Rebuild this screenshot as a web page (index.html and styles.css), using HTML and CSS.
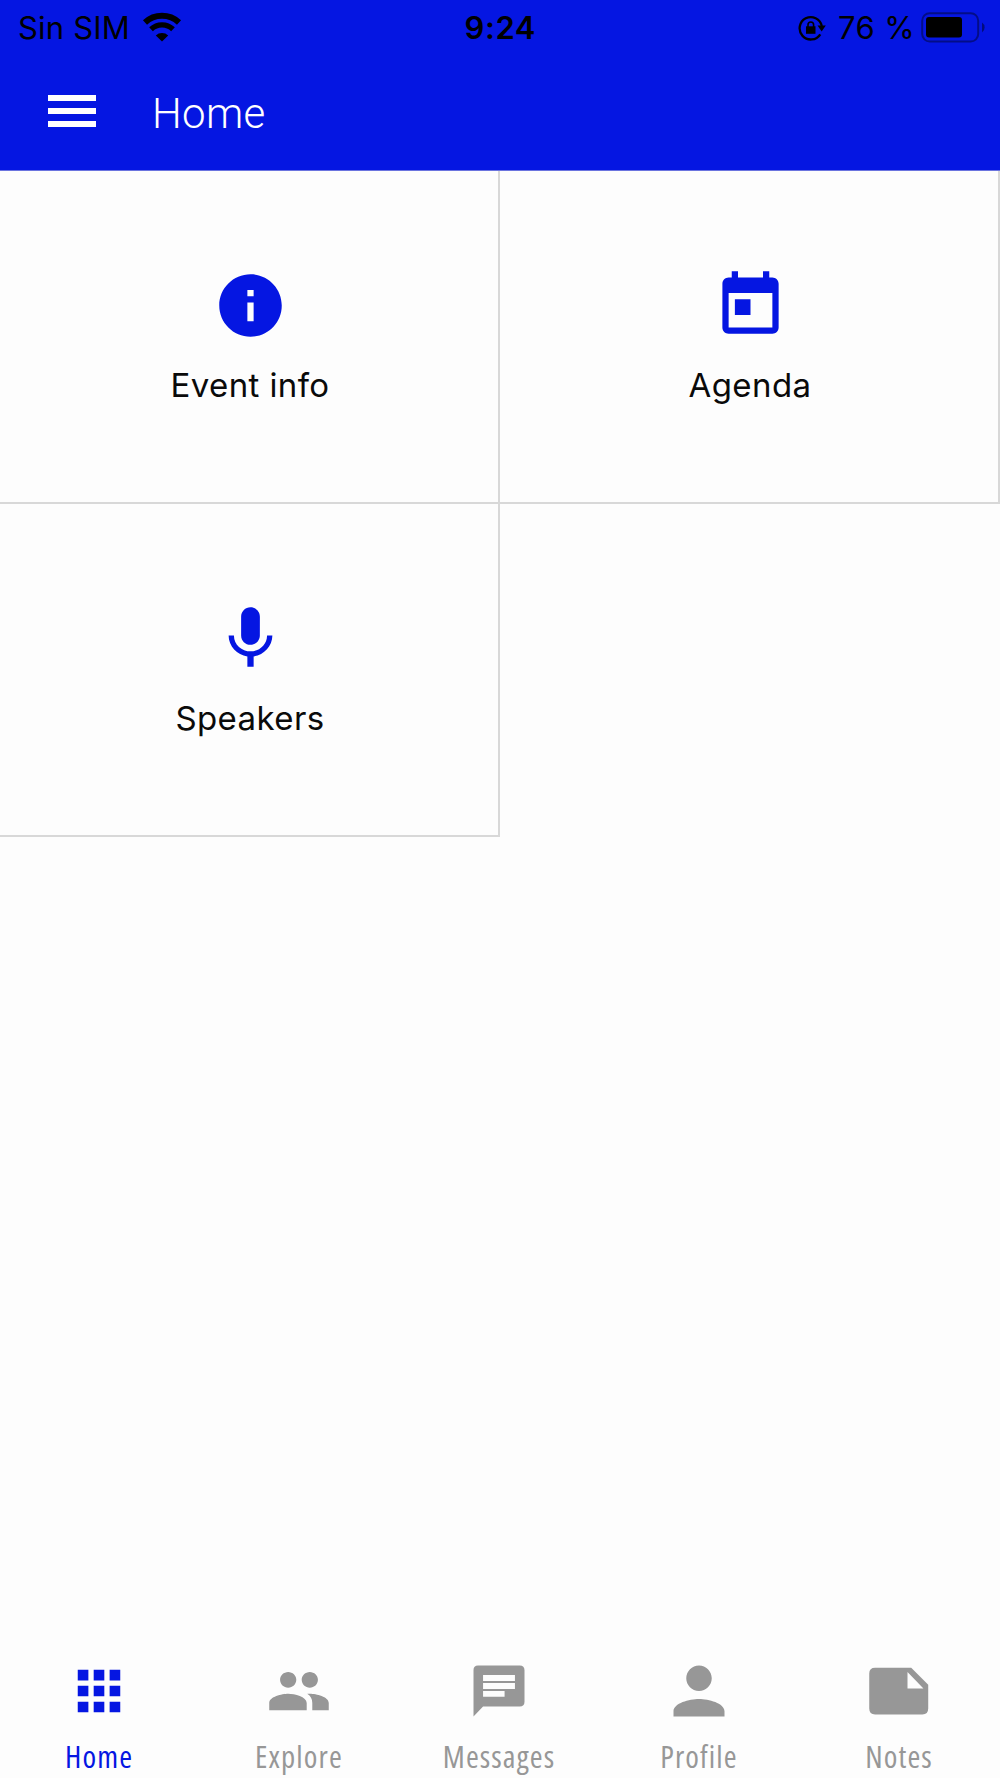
FILE: index.html
```
<!DOCTYPE html>
<html lang="en">
  <head>
    <meta charset="UTF-8" />
    <title>Home</title>
    <link rel="stylesheet" href="styles.css">
  </head>
  <body>
    <header class="header">
      <div class="status-bar">
        <div class="status-left">
          <span class="carrier">Sin SIM</span>
          <svg class="wifi" viewBox="0 0 40 30" width="40" height="30">
            <path d="M3 10.5a25 25 0 0 1 34 0" fill="none" stroke="#000" stroke-width="6" />
            <path d="M9 17.3a16 16 0 0 1 22 0" fill="none" stroke="#000" stroke-width="5.4" />
            <path d="M20 29.5l-6.2-6.1a9 9 0 0 1 12.4 0z" />
          </svg>
        </div>
        <span class="clock">9:24</span>
        <div class="status-right">
          <svg class="lock" viewBox="0 0 28 26" width="28" height="26">
            <path d="M22.3 19.3A11.2 11.2 0 1 1 23.8 11" fill="none" stroke="#000" stroke-width="2.3" />
            <path d="M19.5 10.5h8.3l-4.1 6z" />
            <path d="M8 11.3h9.5v7.5H8z" />
            <path d="M10 12V9.8a2.8 2.8 0 0 1 5.6 0V12" fill="none" stroke="#000" stroke-width="1.6" />
          </svg>
          <span class="percent">76 %</span>
          <svg class="battery" viewBox="0 0 64 31" width="64" height="31">
            <rect x="1.2" y="1.2" width="56" height="28.4" rx="7.5" fill="none" stroke="#000" stroke-opacity=".4" stroke-width="2" />
            <rect x="5" y="5" width="36" height="20.5" rx="3" />
            <path d="M61 10.5q2.6 1.6 2.6 5t-2.6 5z" fill-opacity=".45" />
          </svg>
        </div>
      </div>
      <div class="toolbar">
        <div class="menu">
          <span></span>
          <span></span>
          <span></span>
        </div>
        <h1 class="title">Home</h1>
      </div>
    </header>

    <main class="tiles">
      <div class="tile">
        <svg class="tile-icon" viewBox="0 0 24 24">
          <path d="M12 2C6.480 2 2 6.480 2 12s4.480 10 10 10 10-4.480 10-10S17.520 2 12 2zm1 15h-2v-6h2v6zm0-8h-2V7h2v2z" />
        </svg>
        <span class="tile-label">Event info</span>
      </div>
      <div class="tile">
        <svg class="tile-icon" viewBox="0 0 24 24">
          <path d="M19 3h-1V1h-2v2H8V1H6v2H5c-1.110 0-1.990.9-1.990 2L3 19c0 1.100.890 2 2 2h14c1.100 0 2-.9 2-2V5c0-1.100-.9-2-2-2zm0 16H5V8h14v11zM7 10h5v5H7z" />
        </svg>
        <span class="tile-label">Agenda</span>
      </div>
      <div class="tile">
        <svg class="tile-icon" viewBox="0 0 24 24">
          <path d="M12 14c1.660 0 2.990-1.340 2.990-3L15 5c0-1.660-1.340-3-3-3S9 3.340 9 5v6c0 1.660 1.340 3 3 3zm5.300-3c0 3-2.540 5.100-5.300 5.100S6.700 14 6.700 11H5c0 3.410 2.720 6.230 6 6.720V21h2v-3.280c3.280-.48 6-3.300 6-6.720h-1.700z" />
        </svg>
        <span class="tile-label">Speakers</span>
      </div>
    </main>

    <nav class="tabs">
      <div class="tab active">
        <svg class="tab-icon" viewBox="0 0 512 512">
          <path d="M96 96h80v80H96zM216 96h80v80h-80zM336 96h80v80h-80zM96 216h80v80H96zM216 216h80v80h-80zM336 216h80v80h-80zM96 336h80v80H96zM216 336h80v80h-80zM336 336h80v80h-80z" />
        </svg>
        <span class="tab-label">Home</span>
      </div>
      <div class="tab">
        <svg class="tab-icon" viewBox="0 0 512 512">
          <path d="M337.454 232c33.599 0 61.092-27.002 61.092-60 0-32.997-27.493-60-61.092-60s-61.090 27.003-61.090 60c0 32.998 27.491 60 61.090 60zm-162.908 0c33.599 0 61.090-27.002 61.090-60 0-32.997-27.491-60-61.090-60s-61.092 27.003-61.092 60c0 32.998 27.493 60 61.092 60zm0 44C126.688 276 32 298.998 32 346v54h282v-54c0-47.002-91.599-70-139.454-70zm162.908 0c-6.105 0-12 0-19.454 1 26 17 38 39 38 69v54h124v-54c0-47.002-94.688-70-142.546-70z" />
        </svg>
        <span class="tab-label">Explore</span>
      </div>
      <div class="tab">
        <svg class="tab-icon" viewBox="0 0 512 512">
          <path fill-rule="evenodd" d="M412 64H98q-34 0-34 34v350l72-76h276q36 0 36-36V100q0-36-36-36zM136 136h240v44H136zM136 196h240v44H136zM136 256h162v44H136z" />
        </svg>
        <span class="tab-label">Messages</span>
      </div>
      <div class="tab">
        <svg class="tab-icon" viewBox="0 0 512 512">
          <path d="M256 256c52.805 0 96-43.201 96-96s-43.195-96-96-96-96 43.201-96 96 43.195 96 96 96zm0 60c-72 0-192 32-192 92v40h384v-40c0-60-120-92-192-92z" />
        </svg>
        <span class="tab-label">Profile</span>
      </div>
      <div class="tab">
        <svg class="tab-icon" viewBox="0 0 512 512">
          <path fill-rule="evenodd" d="M348 80H76q-44 0-44 44v264q0 44 44 44h356q44 0 44-44V208zM320 112v126h120z" />
        </svg>
        <span class="tab-label">Notes</span>
      </div>
    </nav>
  </body>
</html>
```

FILE: styles.css
```
* {
  box-sizing: border-box;
}

body {
  margin: 0;
  height: 1778px;
  display: flex;
  flex-direction: column;
  background-color: #fdfdfd;
  font-family: Inter, "Liberation Sans", sans-serif;
  overflow: hidden;
}

.header {
  height: 171px;
  background-color: #0516e2;
  border-bottom: 1px solid #6b74df;
}

.status-bar {
  height: 54px;
  padding: 0 15px 0 18px;
  display: grid;
  grid-template-columns: 1fr 72px 1fr;
  align-items: center;
  font-size: 31px;
  line-height: 56px;
  color: #000;
}

.status-left,
.status-right {
  display: flex;
  align-items: center;
}

.status-left {
  letter-spacing: 0.2px;
}

.status-right {
  justify-content: flex-end;
}

.wifi {
  margin: -2px 0 0 12px;
}

.clock {
  margin-left: -1px;
  font-weight: 600;
  letter-spacing: 0.6px;
  white-space: nowrap;
}

.percent {
  margin: 0 6px 0 12px;
  letter-spacing: 0.4px;
}

.battery {
  margin-top: -2px;
}

.toolbar {
  height: 116px;
  padding-left: 48px;
  display: flex;
  align-items: flex-start;
}

.menu {
  width: 48px;
  padding-top: 41px;
  display: flex;
  flex-direction: column;
  gap: 7px;
}

.menu span {
  height: 6px;
  background-color: #fff;
}

.title {
  margin: 35px 0 0 56px;
  font-family: Roboto, sans-serif;
  font-size: 42px;
  font-weight: 300;
  line-height: 50px;
  letter-spacing: 0.3px;
  color: #fff;
}

.tiles {
  display: grid;
  grid-template-columns: 500px 500px;
  grid-auto-rows: 333px;
}

.tile {
  padding-top: 97px;
  display: flex;
  flex-direction: column;
  align-items: center;
  border-right: 2px solid #d8d8d8;
  border-bottom: 2px solid #d8d8d8;
}

.tile-icon {
  width: 75px;
  height: 75px;
  margin-left: 3px;
  fill: #0516e2;
}

.tile-label {
  margin: 22px 0 0 2px;
  font-size: 33px;
  line-height: 40px;
  letter-spacing: 0.4px;
  color: #0a0a0a;
}

.tabs {
  margin-top: auto;
  margin-left: -1px;
  margin-right: 1px;
  height: 121px;
  display: grid;
  grid-template-columns: repeat(5, 1fr);
}

.tab {
  display: flex;
  flex-direction: column;
  align-items: center;
  color: #979797;
}

.tab.active {
  color: #0516e2;
}

.tab-icon {
  width: 68px;
  height: 68px;
  fill: currentColor;
}

.tab-label {
  margin-top: 10px;
  font-family: "Open Sans", sans-serif;
  font-size: 31px;
  font-stretch: 75%;
  line-height: 42px;
  letter-spacing: 1.1px;
}
```
